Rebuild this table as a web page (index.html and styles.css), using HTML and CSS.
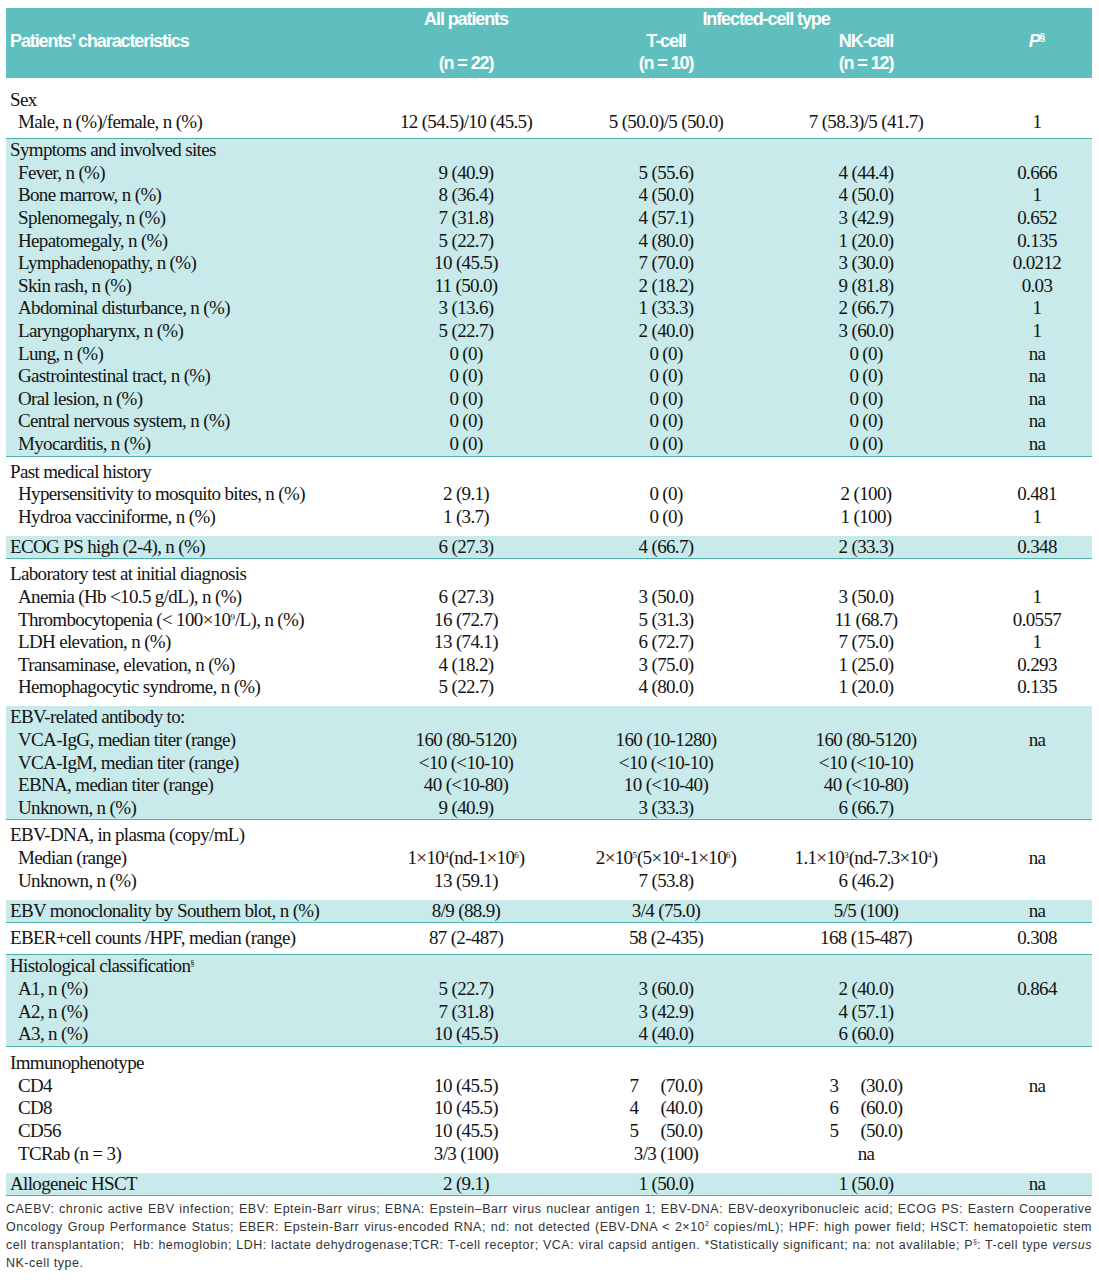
FILE: index.html
```html
<!DOCTYPE html>
<html lang="en">
<head>
<meta charset="utf-8">
<title>Patients' characteristics</title>
<link rel="stylesheet" href="styles.css">
</head>
<body>
<div class="tbl">
  <div class="head">
    <div class="h-title">Patients’ characteristics</div>
    <div class="h-all">All patients</div>
    <div class="h-n22">(n = 22)</div>
    <div class="h-inf">Infected-cell type</div>
    <div class="h-t">T-cell</div>
    <div class="h-t2">(n = 10)</div>
    <div class="h-nk">NK-cell</div>
    <div class="h-nk2">(n = 12)</div>
    <div class="h-p"><i>P</i><sup class="hs">§</sup></div>
  </div>

  <div class="grp sex">
    <div class="row"><span class="lab ttl">Sex</span></div>
    <div class="row"><span class="lab">Male, n (%)/female, n (%)</span><span>12 (54.5)/10 (45.5)</span><span>5 (50.0)/5 (50.0)</span><span>7 (58.3)/5 (41.7)</span><span class="p">1</span></div>
  </div>

  <div class="band">
    <div class="row"><span class="lab ttl">Symptoms and involved sites</span></div>
    <div class="row"><span class="lab">Fever, n (%)</span><span>9 (40.9)</span><span>5 (55.6)</span><span>4 (44.4)</span><span class="p">0.666</span></div>
    <div class="row"><span class="lab">Bone marrow, n (%)</span><span>8 (36.4)</span><span>4 (50.0)</span><span>4 (50.0)</span><span class="p">1</span></div>
    <div class="row"><span class="lab">Splenomegaly, n (%)</span><span>7 (31.8)</span><span>4 (57.1)</span><span>3 (42.9)</span><span class="p">0.652</span></div>
    <div class="row"><span class="lab">Hepatomegaly, n (%)</span><span>5 (22.7)</span><span>4 (80.0)</span><span>1 (20.0)</span><span class="p">0.135</span></div>
    <div class="row"><span class="lab">Lymphadenopathy, n (%)</span><span>10 (45.5)</span><span>7 (70.0)</span><span>3 (30.0)</span><span class="p">0.0212</span></div>
    <div class="row"><span class="lab">Skin rash, n (%)</span><span>11 (50.0)</span><span>2 (18.2)</span><span>9 (81.8)</span><span class="p">0.03</span></div>
    <div class="row"><span class="lab">Abdominal disturbance, n (%)</span><span>3 (13.6)</span><span>1 (33.3)</span><span>2 (66.7)</span><span class="p">1</span></div>
    <div class="row"><span class="lab">Laryngopharynx, n (%)</span><span>5 (22.7)</span><span>2 (40.0)</span><span>3 (60.0)</span><span class="p">1</span></div>
    <div class="row"><span class="lab">Lung, n (%)</span><span>0 (0)</span><span>0 (0)</span><span>0 (0)</span><span class="p">na</span></div>
    <div class="row"><span class="lab">Gastrointestinal tract, n (%)</span><span>0 (0)</span><span>0 (0)</span><span>0 (0)</span><span class="p">na</span></div>
    <div class="row"><span class="lab">Oral lesion, n (%)</span><span>0 (0)</span><span>0 (0)</span><span>0 (0)</span><span class="p">na</span></div>
    <div class="row"><span class="lab">Central nervous system, n (%)</span><span>0 (0)</span><span>0 (0)</span><span>0 (0)</span><span class="p">na</span></div>
    <div class="row"><span class="lab">Myocarditis, n (%)</span><span>0 (0)</span><span>0 (0)</span><span>0 (0)</span><span class="p">na</span></div>
  </div>

  <div class="grp">
    <div class="row"><span class="lab ttl">Past medical history</span></div>
    <div class="row"><span class="lab">Hypersensitivity to mosquito bites, n (%)</span><span>2 (9.1)</span><span>0 (0)</span><span>2 (100)</span><span class="p">0.481</span></div>
    <div class="row"><span class="lab">Hydroa vacciniforme, n (%)</span><span>1 (3.7)</span><span>0 (0)</span><span>1 (100)</span><span class="p">1</span></div>
  </div>

  <div class="band">
    <div class="row"><span class="lab ttl">ECOG PS high (2-4), n (%)</span><span>6 (27.3)</span><span>4 (66.7)</span><span>2 (33.3)</span><span class="p">0.348</span></div>
  </div>

  <div class="grp">
    <div class="row"><span class="lab ttl">Laboratory test at initial diagnosis</span></div>
    <div class="row"><span class="lab">Anemia (Hb &lt;10.5 g/dL), n (%)</span><span>6 (27.3)</span><span>3 (50.0)</span><span>3 (50.0)</span><span class="p">1</span></div>
    <div class="row"><span class="lab">Thrombocytopenia (&lt; 100×10<sup class="s">9</sup>/L), n (%)</span><span>16 (72.7)</span><span>5 (31.3)</span><span>11 (68.7)</span><span class="p">0.0557</span></div>
    <div class="row"><span class="lab">LDH elevation, n (%)</span><span>13 (74.1)</span><span>6 (72.7)</span><span>7 (75.0)</span><span class="p">1</span></div>
    <div class="row"><span class="lab">Transaminase, elevation, n (%)</span><span>4 (18.2)</span><span>3 (75.0)</span><span>1 (25.0)</span><span class="p">0.293</span></div>
    <div class="row"><span class="lab">Hemophagocytic syndrome, n (%)</span><span>5 (22.7)</span><span>4 (80.0)</span><span>1 (20.0)</span><span class="p">0.135</span></div>
  </div>

  <div class="band">
    <div class="row"><span class="lab ttl">EBV-related antibody to:</span></div>
    <div class="row"><span class="lab">VCA-IgG, median titer (range)</span><span>160 (80-5120)</span><span>160 (10-1280)</span><span>160 (80-5120)</span><span class="p">na</span></div>
    <div class="row"><span class="lab">VCA-IgM, median titer (range)</span><span>&lt;10 (&lt;10-10)</span><span>&lt;10 (&lt;10-10)</span><span>&lt;10 (&lt;10-10)</span><span class="p"></span></div>
    <div class="row"><span class="lab">EBNA, median titer (range)</span><span>40 (&lt;10-80)</span><span>10 (&lt;10-40)</span><span>40 (&lt;10-80)</span><span class="p"></span></div>
    <div class="row"><span class="lab">Unknown, n (%)</span><span>9 (40.9)</span><span>3 (33.3)</span><span>6 (66.7)</span><span class="p"></span></div>
  </div>

  <div class="grp">
    <div class="row"><span class="lab ttl">EBV-DNA, in plasma (copy/mL)</span></div>
    <div class="row"><span class="lab">Median (range)</span><span>1×10<sup class="s">4</sup>(nd-1×10<sup class="s">6</sup>)</span><span>2×10<sup class="s">5</sup>(5×10<sup class="s">4</sup>-1×10<sup class="s">6</sup>)</span><span>1.1×10<sup class="s">3</sup>(nd-7.3×10<sup class="s">4</sup>)</span><span class="p">na</span></div>
    <div class="row"><span class="lab">Unknown, n (%)</span><span>13 (59.1)</span><span>7 (53.8)</span><span>6 (46.2)</span><span class="p"></span></div>
  </div>

  <div class="band">
    <div class="row"><span class="lab ttl">EBV monoclonality by Southern blot, n (%)</span><span>8/9 (88.9)</span><span>3/4 (75.0)</span><span>5/5 (100)</span><span class="p">na</span></div>
  </div>

  <div class="grp eber">
    <div class="row"><span class="lab ttl">EBER+cell counts /HPF, median (range)</span><span>87 (2-487)</span><span>58 (2-435)</span><span>168 (15-487)</span><span class="p">0.308</span></div>
  </div>

  <div class="band">
    <div class="row"><span class="lab ttl">Histological classification<sup class="s">§</sup></span></div>
    <div class="row"><span class="lab">A1, n (%)</span><span>5 (22.7)</span><span>3 (60.0)</span><span>2 (40.0)</span><span class="p">0.864</span></div>
    <div class="row"><span class="lab">A2, n (%)</span><span>7 (31.8)</span><span>3 (42.9)</span><span>4 (57.1)</span><span class="p"></span></div>
    <div class="row"><span class="lab">A3, n (%)</span><span>10 (45.5)</span><span>4 (40.0)</span><span>6 (60.0)</span><span class="p"></span></div>
  </div>

  <div class="grp imm">
    <div class="row"><span class="lab ttl">Immunophenotype</span></div>
    <div class="row"><span class="lab">CD4</span><span>10 (45.5)</span><span>7<i class="gap"></i>(70.0)</span><span>3<i class="gap"></i>(30.0)</span><span class="p">na</span></div>
    <div class="row"><span class="lab">CD8</span><span>10 (45.5)</span><span>4<i class="gap"></i>(40.0)</span><span>6<i class="gap"></i>(60.0)</span><span class="p"></span></div>
    <div class="row"><span class="lab">CD56</span><span>10 (45.5)</span><span>5<i class="gap"></i>(50.0)</span><span>5<i class="gap"></i>(50.0)</span><span class="p"></span></div>
    <div class="row"><span class="lab">TCRab (n = 3)</span><span>3/3 (100)</span><span class="tcr">3/3 (100)</span><span>na</span><span class="p"></span></div>
  </div>

  <div class="band">
    <div class="row"><span class="lab ttl">Allogeneic HSCT</span><span>2 (9.1)</span><span>1 (50.0)</span><span>1 (50.0)</span><span class="p">na</span></div>
  </div>

  <div class="foot">
    <span class="fl">CAEBV: chronic active EBV infection; EBV: Eptein-Barr virus; EBNA: Epstein–Barr virus nuclear antigen 1; EBV-DNA: EBV-deoxyribonucleic acid; ECOG PS: Eastern Cooperative</span>
    <span class="fl">Oncology Group Performance Status; EBER: Epstein-Barr virus-encoded RNA; nd: not detected (EBV-DNA &lt; 2×10<sup class="fs">2</sup> copies/mL); HPF: high power field; HSCT: hematopoietic stem</span>
    <span class="fl">cell transplantation;&nbsp; Hb: hemoglobin; LDH: lactate dehydrogenase;TCR: T-cell receptor; VCA: viral capsid antigen. *Statistically significant; na: not avalilable; P<sup class="fs">§</sup>: T-cell type <i>versus</i></span>
    <span class="last">NK-cell type.</span>
  </div>
</div>
</body>
</html>
```

FILE: styles.css
```css
body {
  margin: 0;
  background: #ffffff;
}

.tbl {
  width: 1086px;
  margin: 8px 0 0 6px;
  font-family: "Liberation Serif", "Times New Roman", serif;
  font-size: 19px;
  letter-spacing: -0.65px;
  color: #141414;
}

.head {
  display: grid;
  grid-template-columns: 360px 200px 200px 200px 126px;
  grid-template-rows: repeat(3, 22px);
  padding-bottom: 4px;
  background: #5fbfbe;
  color: #ffffff;
  font-family: "Liberation Sans Narrow", "Liberation Sans", Arial, sans-serif;
  font-weight: 700;
  font-size: 18px;
  letter-spacing: -1.1px;
  line-height: 22px;
  text-align: center;
  white-space: nowrap;
}

.h-title { grid-column: 1; grid-row: 1 / 4; align-self: center; text-align: left; padding-left: 4px; }
.h-all { grid-column: 2; grid-row: 1; }
.h-n22 { grid-column: 2; grid-row: 3; }
.h-inf { grid-column: 3 / 5; grid-row: 1; }
.h-t { grid-column: 3; grid-row: 2; }
.h-t2 { grid-column: 3; grid-row: 3; }
.h-nk { grid-column: 4; grid-row: 2; }
.h-nk2 { grid-column: 4; grid-row: 3; }
.h-p { grid-column: 5; grid-row: 2; padding-left: 16px; }
.hs { font-size: 10px; vertical-align: 6px; line-height: 0; letter-spacing: 0; }

.row {
  display: grid;
  grid-template-columns: 360px 200px 200px 200px 126px;
  height: 22.6px;
  line-height: 22.6px;
  text-align: center;
  white-space: nowrap;
}

.lab { text-align: left; padding-left: 12px; }
.lab.ttl { padding-left: 4px; }
.p { padding-left: 16px; }

.s {
  font-size: 9px;
  line-height: 0;
  vertical-align: 6px;
  letter-spacing: 0;
}

.gap {
  display: inline-block;
  width: 22px;
}

.grp {
  padding: 4px 0 7.5px;
}

.grp.sex {
  padding: 10.5px 0 4.5px;
  border-bottom: 1px solid #4eafad;
}

.grp.eber {
  padding: 4px 0 4.5px;
  border-bottom: 1px solid #4eafad;
}

.grp.imm {
  padding-top: 5.5px;
}

.band {
  background: #c8eaea;
  border-bottom: 1px solid #4eafad;
}

.foot {
  margin-top: 3.4px;
  font-family: "Liberation Sans", Arial, sans-serif;
  font-size: 12.5px;
  line-height: 18px;
  letter-spacing: 0.5px;
  color: #333333;
}

.fl {
  display: block;
  text-align: justify;
  text-align-last: justify;
}

.last {
  display: block;
}

.fs {
  font-size: 7px;
  line-height: 0;
  vertical-align: 5px;
  letter-spacing: 0;
}
```
